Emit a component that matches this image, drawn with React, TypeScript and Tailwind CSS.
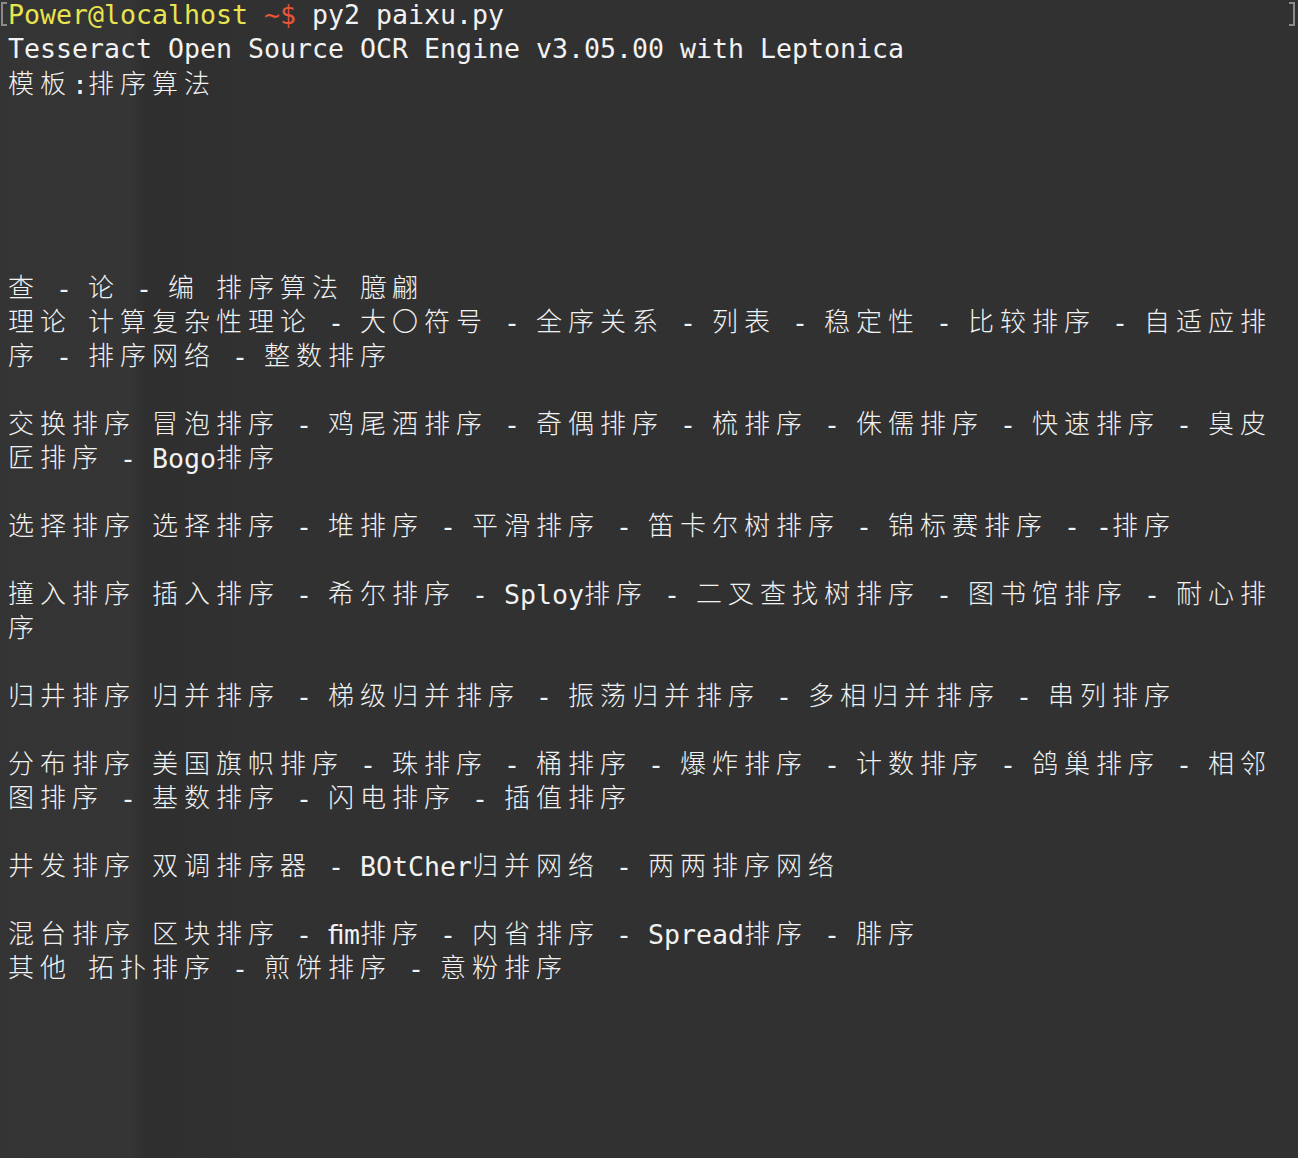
import React from "react";

const lines: string[] = [
  "",
  "Tesseract Open Source OCR Engine v3.05.00 with Leptonica",
  "模板:排序算法",
  "",
  "",
  "",
  "",
  "",
  "查 - 论 - 编 排序算法 臆翩",
  "理论 计算复杂性理论 - 大〇符号 - 全序关系 - 列表 - 稳定性 - 比较排序 - 自适应排",
  "序 - 排序网络 - 整数排序",
  "",
  "交换排序 冒泡排序 - 鸡尾酒排序 - 奇偶排序 - 梳排序 - 侏儒排序 - 快速排序 - 臭皮",
  "匠排序 - Bogo排序",
  "",
  "选择排序 选择排序 - 堆排序 - 平滑排序 - 笛卡尔树排序 - 锦标赛排序 - -排序",
  "",
  "撞入排序 插入排序 - 希尔排序 - Sploy排序 - 二叉查找树排序 - 图书馆排序 - 耐心排",
  "序",
  "",
  "归井排序 归并排序 - 梯级归并排序 - 振荡归并排序 - 多相归并排序 - 串列排序",
  "",
  "分布排序 美国旗帜排序 - 珠排序 - 桶排序 - 爆炸排序 - 计数排序 - 鸽巢排序 - 相邻",
  "图排序 - 基数排序 - 闪电排序 - 插值排序",
  "",
  "井发排序 双调排序器 - BOtCher归并网络 - 两两排序网络",
  "",
  "混台排序 区块排序 - ﬁm排序 - 内省排序 - Spread排序 - 腓序",
  "其他 拓扑排序 - 煎饼排序 - 意粉排序",
];

const isWide = (ch: string) => {
  const c = ch.codePointAt(0) || 0;
  return c >= 0x2e80 && c < 0xfb00;
};

function Cells({ text }: { text: string }) {
  return (
    <>
      {Array.from(text).map((ch, i) =>
        isWide(ch) ? (
          <span
            key={i}
            className="inline-block w-[32px] text-left text-[26px] font-light -translate-y-px [font-family:'Noto_Sans_CJK_SC','DejaVu_Sans_Mono',monospace]"
          >
            {ch}
          </span>
        ) : (
          <span key={i} className="inline-block w-[16px] whitespace-pre">
            {ch}
          </span>
        )
      )}
    </>
  );
}

export default function App() {
  return (
    <div className="relative w-[1298px] h-[1158px] overflow-hidden bg-[linear-gradient(90deg,#343434_0px,#353535_130px,#2f2f2f_145px,#303030_220px,#313131_240px,#313131_100%)]">
      <div className="flex flex-col pl-[8px] text-[26.6px] text-[#f2f2f2] [font-family:'DejaVu_Sans_Mono','Noto_Sans_CJK_SC',monospace]">
        {lines.map((l, idx) =>
          idx === 0 ? (
            <div key={idx} className="flex h-[34px] leading-[30px] whitespace-pre">
              <span className="text-[#e8e44f]">
                <Cells text="Power@localhost" />
              </span>
              <Cells text=" " />
              <span className="text-[#e7553a]">
                <Cells text="~$" />
              </span>
              <Cells text=" py2 paixu.py" />
            </div>
          ) : (
            <div key={idx} className="h-[34px] leading-[30px] whitespace-pre">
              <Cells text={l} />
            </div>
          )
        )}
      </div>

      <div className="absolute left-[1px] top-[2px] w-[6px] h-[24px] border-l-2 border-t-2 border-b-2 border-[#8a8a8a]" />
      <div className="absolute left-[1289px] top-[2px] w-[6px] h-[24px] border-r-2 border-t-2 border-b-2 border-[#8a8a8a]" />
    </div>
  );
}
